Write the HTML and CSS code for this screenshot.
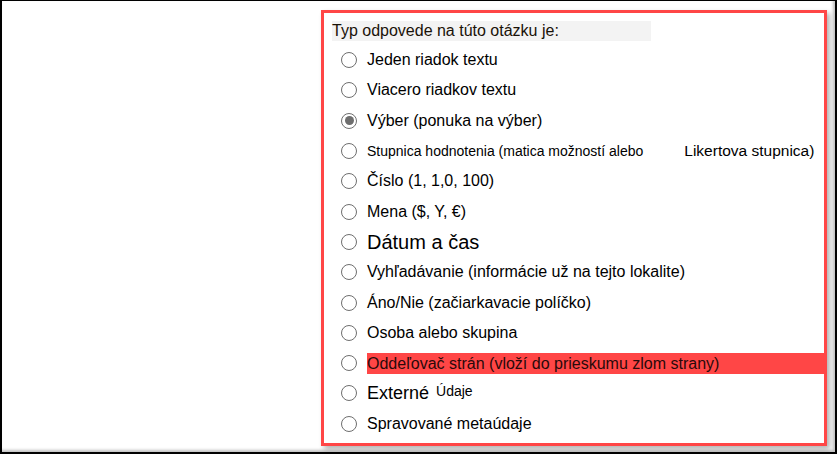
FILE: index.html
```html
<!DOCTYPE html>
<html lang="sk">
<head>
<meta charset="utf-8">
<title>Typ odpovede</title>
<link rel="stylesheet" href="styles.css">
</head>
<body>
<div class="frame">
  <div class="panel">
    <div class="title">Typ odpovede na túto otázku je:</div>
    <ul class="options">
      <li class="opt"><span class="radio"></span><span class="label">Jeden riadok textu</span></li>
      <li class="opt"><span class="radio"></span><span class="label">Viacero riadkov textu</span></li>
      <li class="opt"><span class="radio checked"></span><span class="label">Výber (ponuka na výber)</span></li>
      <li class="opt"><span class="radio"></span><span class="label small">Stupnica hodnotenia (matica možností alebo</span><span class="label likert">Likertova stupnica)</span></li>
      <li class="opt"><span class="radio"></span><span class="label">Číslo (1, 1,0, 100)</span></li>
      <li class="opt"><span class="radio"></span><span class="label">Mena ($, Y, €)</span></li>
      <li class="opt"><span class="radio"></span><span class="label big">Dátum a čas</span></li>
      <li class="opt"><span class="radio"></span><span class="label">Vyhľadávanie (informácie už na tejto lokalite)</span></li>
      <li class="opt"><span class="radio"></span><span class="label">Áno/Nie (začiarkavacie políčko)</span></li>
      <li class="opt"><span class="radio"></span><span class="label">Osoba alebo skupina</span></li>
      <li class="opt"><span class="radio"></span><span class="label marked">Oddeľovač strán (vloží do prieskumu zlom strany)</span></li>
      <li class="opt"><span class="radio"></span><span class="label ext">Externé</span><span class="label sup">Údaje</span></li>
      <li class="opt"><span class="radio"></span><span class="label">Spravované metaúdaje</span></li>
    </ul>
  </div>
</div>
</body>
</html>
```

FILE: styles.css
```css
html, body {
  margin: 0;
  padding: 0;
  background: #ffffff;
}

body {
  font-family: "Liberation Sans", Arial, sans-serif;
  color: #000000;
}

.frame {
  width: 837px;
  height: 454px;
  box-sizing: border-box;
  border-style: solid;
  border-color: #000000;
  border-width: 1px 2px 2px 2px;
  padding: 9px 0 0 319px;
  box-shadow: inset -2px -2px 3px rgba(0, 0, 0, 0.25);
}

.panel {
  width: 506px;
  height: 436px;
  box-sizing: border-box;
  border: 3px solid #ff4646;
  box-shadow: 3px 3px 5px rgba(0, 0, 0, 0.3);
  padding: 8px 0 0 8px;
  background: #ffffff;
}

.title {
  width: 319px;
  height: 20px;
  line-height: 20px;
  font-size: 16px;
  background: #f3f3f3;
  color: #1a1208;
}

.options {
  list-style: none;
  margin: 4px 0 0 0;
  padding: 0;
}

.opt {
  display: flex;
  align-items: center;
  height: 30.3px;
  padding-left: 9px;
}

.radio {
  flex: none;
  width: 16px;
  height: 16px;
  box-sizing: border-box;
  border: 1.7px solid #6e6e6e;
  border-radius: 50%;
  display: flex;
  align-items: center;
  justify-content: center;
  background: #ffffff;
}

.radio.checked::after {
  content: "";
  width: 9px;
  height: 9px;
  border-radius: 50%;
  background: #6e6e6e;
}

.label {
  margin-left: 10px;
  font-size: 16px;
  line-height: 20px;
  white-space: nowrap;
}

.label.small {
  font-size: 14px;
}

.label.likert {
  margin-left: 41px;
  font-size: 15.5px;
}

.label.big {
  font-size: 20px;
  line-height: 24px;
}

.label.marked {
  flex: 1;
  height: 21px;
  line-height: 21px;
  background: #ff4646;
  color: #2a0a0a;
}

.label.ext {
  font-size: 18px;
  line-height: 22px;
}

.label.sup {
  margin-left: 7px;
  font-size: 14px;
  line-height: 16px;
  align-self: flex-start;
  margin-top: 5px;
}
```
